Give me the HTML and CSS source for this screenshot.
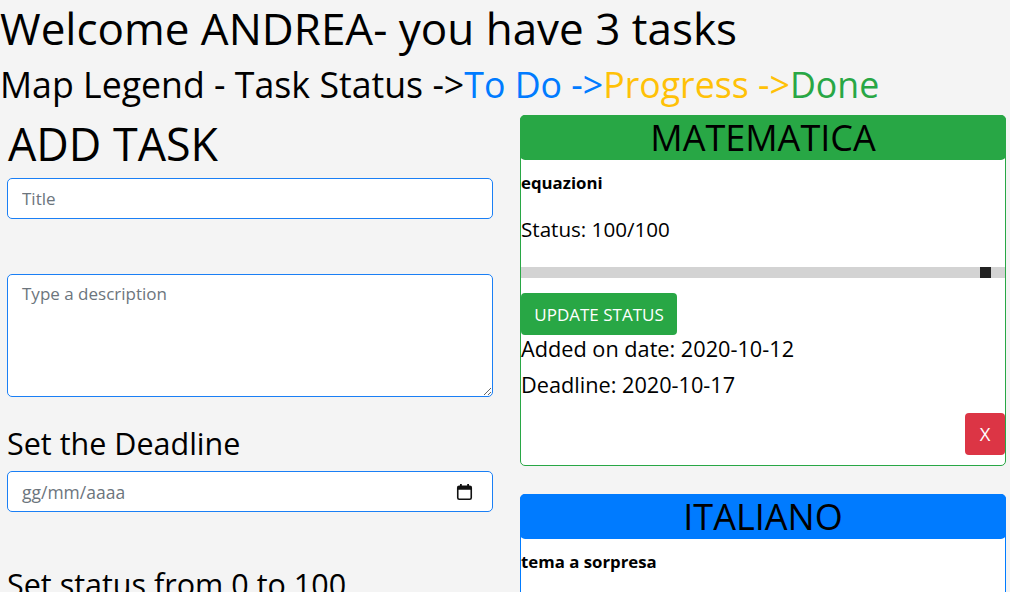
FILE: index.html
```html
<!DOCTYPE html>
<html lang="it">
<head>
<meta charset="utf-8">
<title>Tasks</title>
<link rel="stylesheet" href="styles.css">
</head>
<body>
<div class="page">
  <h1 class="welcome">Welcome ANDREA- you have 3 tasks</h1>
  <h2 class="legend">Map Legend - Task Status -&gt;<span class="c-todo">To Do -&gt;</span><span class="c-prog">Progress -&gt;</span><span class="c-done">Done</span></h2>
  <div class="row">
    <div class="form-col">
      <h1 class="add-title">ADD TASK</h1>
      <input class="field" type="text" placeholder="Title">
      <textarea class="field area" placeholder="Type a description"></textarea>
      <h3 class="label">Set the Deadline</h3>
      <div class="field date">
        <span class="ph">gg/mm/aaaa</span>
        <svg class="cal" width="17" height="18" viewBox="0 0 17 18" aria-hidden="true">
          <rect x="1.75" y="3.25" width="13.5" height="13" rx="1.5" fill="none" stroke="#111" stroke-width="1.6"/>
          <rect x="1.75" y="3.25" width="13.5" height="3.5" fill="#111"/>
          <rect x="4" y="1" width="1.8" height="3" fill="#111"/>
          <rect x="11.2" y="1" width="1.8" height="3" fill="#111"/>
        </svg>
      </div>
      <h3 class="label status-label">Set status from 0 to 100</h3>
    </div>
    <div class="task-col">
      <div class="card card-done">
        <h2 class="card-head">MATEMATICA</h2>
        <h6 class="task-desc">equazioni</h6>
        <h5 class="status">Status: 100/100</h5>
        <div class="range"><span class="thumb"></span></div>
        <button class="btn btn-update">UPDATE STATUS</button>
        <h5 class="meta">Added on date: 2020-10-12</h5>
        <h5 class="meta meta-last">Deadline: 2020-10-17</h5>
        <div class="card-foot"><button class="btn btn-delete">X</button></div>
      </div>
      <div class="card card-todo">
        <h2 class="card-head">ITALIANO</h2>
        <h6 class="task-desc">tema a sorpresa</h6>
      </div>
    </div>
  </div>
</div>
</body>
</html>
```

FILE: styles.css
```css
* { box-sizing: border-box; }

html, body {
  margin: 0;
  padding: 0;
  background: #f4f4f4;
  overflow: hidden;
}

body {
  font-family: "Open Sans", "Noto Sans", sans-serif;
  color: #000;
  font-size: 18.4px;
}

.page {
  width: 1010px;
  height: 592px;
  overflow: hidden;
}

h1, h2, h3, h5, h6 {
  margin: 0;
  font-weight: 400;
}

.welcome {
  font-size: 44px;
  line-height: 56px;
  margin: 0;
  white-space: nowrap;
}

.legend {
  font-size: 35.7px;
  line-height: 44px;
  margin: 6px 0 9px;
  white-space: nowrap;
}

.c-todo { color: #007bff; }
.c-prog { color: #ffc107; }
.c-done { color: #28a745; }

.row {
  display: flex;
  gap: 27px;
  padding-left: 7px;
}

.form-col {
  width: 486px;
  display: flex;
  flex-direction: column;
}

.add-title {
  font-size: 44.8px;
  line-height: 55px;
  margin: 1px 0 7px 1px;
}

.field {
  display: block;
  width: 486px;
  height: 41px;
  border: 1px solid #1a7ff5;
  border-radius: 5px;
  background: #fff;
  padding: 0 13px 0 14px;
  font-family: inherit;
  font-size: 17px;
  color: #495057;
  outline: none;
}

.field::placeholder { color: #6c757d; }

.area {
  margin-top: 55px;
  height: 123px;
  padding-top: 7px;
  resize: vertical;
}

.label {
  font-size: 30.5px;
  line-height: 38px;
  margin-top: 27px;
  margin-bottom: 9px;
}

.date {
  display: flex;
  align-items: center;
  justify-content: space-between;
  padding-right: 19px;
}

.ph {
  color: #6c757d;
  font-size: 17.5px;
}

.status-label {
  margin-top: 53px;
}

.task-col {
  width: 486px;
  display: flex;
  flex-direction: column;
  gap: 28px;
}

.card {
  background: #fff;
  border: 1px solid;
  border-radius: 5px;
  display: flex;
  flex-direction: column;
}

.card-done { border-color: #28a745; }
.card-todo { border-color: #007bff; height: 200px; }

.card-head {
  font-size: 36px;
  font-weight: 400;
  text-align: center;
  height: 45px;
  line-height: 45px;
  margin: -1px -1px 0;
  border-radius: 5px;
}

.card-done .card-head { background: #28a745; }
.card-todo .card-head { background: #007bff; }

.task-desc {
  font-size: 16.8px;
  line-height: 22px;
  font-weight: 700;
  margin-top: 12px;
}

.status {
  font-size: 20.6px;
  line-height: 28px;
  margin-top: 21px;
}

.range {
  margin-top: 24px;
  height: 11px;
  background: #d3d3d3;
  display: flex;
  justify-content: flex-end;
  padding-right: 14px;
}

.thumb {
  width: 11px;
  height: 11px;
  background: #222;
}

.btn {
  font-family: inherit;
  border: none;
  border-radius: 4px;
  color: #fff;
  font-size: 17px;
  cursor: pointer;
}

.btn-update {
  align-self: flex-start;
  margin-top: 15px;
  width: 156px;
  height: 42px;
  background: #28a745;
  padding: 0;
}

.meta {
  font-size: 21.7px;
  line-height: 26.4px;
  margin-top: 1px;
}

.meta-last {
  margin-top: 10px;
}

.card-foot {
  display: flex;
  justify-content: flex-end;
  margin-top: 14px;
  padding-bottom: 10px;
}

.btn-delete {
  width: 40px;
  height: 42px;
  background: #dc3545;
  padding: 0;
  font-size: 18.4px;
}
```
